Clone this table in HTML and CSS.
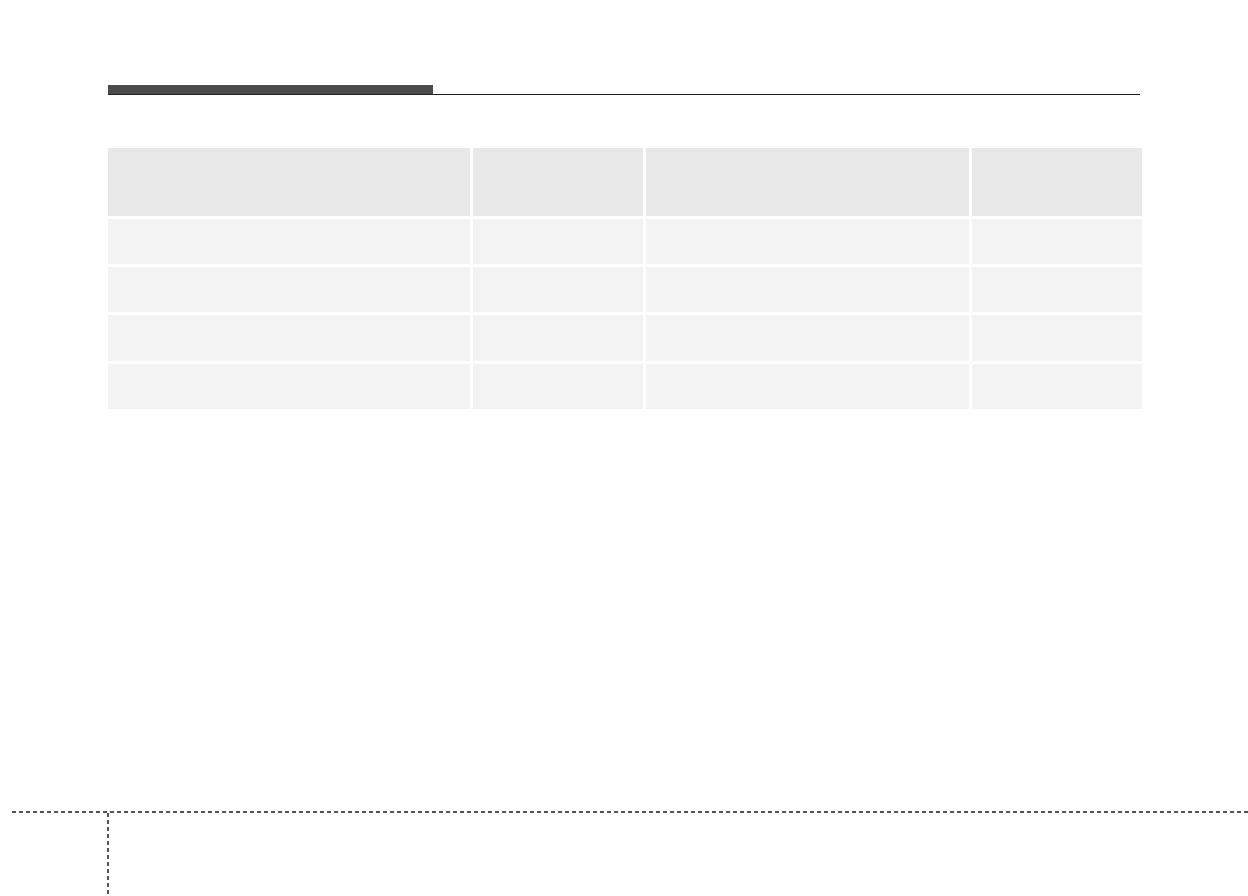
FILE: index.html
```html
<!DOCTYPE html>
<html lang="en">
<head>
    <meta charset="UTF-8">
    <meta name="viewport" content="width=device-width, initial-scale=1.0">
    <title>Manual page</title>
    <link rel="stylesheet" href="styles.css">
</head>
<body>

    <div class="page">
        <header class="page-head">
            <div class="head-tab"></div>
        </header>

        <div class="spec-table">
            <div class="cell head"></div>
            <div class="cell head"></div>
            <div class="cell head"></div>
            <div class="cell head"></div>

            <div class="cell"></div>
            <div class="cell"></div>
            <div class="cell"></div>
            <div class="cell"></div>

            <div class="cell"></div>
            <div class="cell"></div>
            <div class="cell"></div>
            <div class="cell"></div>

            <div class="cell"></div>
            <div class="cell"></div>
            <div class="cell"></div>
            <div class="cell"></div>

            <div class="cell"></div>
            <div class="cell"></div>
            <div class="cell"></div>
            <div class="cell"></div>
        </div>

        <footer class="page-foot">
            <div class="foot-rule"></div>
            <div class="foot-stem"></div>
        </footer>
    </div>

</body>
</html>
```

FILE: styles.css
```css
body {
    font-family: "Liberation Sans", Arial, sans-serif;
    background-color: #fff;
    color: #231f20;
    margin: 0;
    padding: 0;
}

.page {
    min-height: 896px;
    display: flex;
    flex-direction: column;
}

.page-head {
    margin: 85px 108px 0 108px;
    border-bottom: 1px solid #231f20;
}

.head-tab {
    width: 325px;
    height: 9px;
    background-color: #4b4b4b;
}

.spec-table {
    margin: 53px 106px 0 108px;
    display: grid;
    grid-template-columns: 362px 170px 323px 170px;
    grid-template-rows: 68px 45px 45px 46px 45px;
    gap: 3px;
}

.cell {
    background-color: #f3f3f3;
}

.cell.head {
    background-color: #e8e8e8;
}

.page-foot {
    margin-top: auto;
    height: 85px;
    padding-left: 12px;
    display: flex;
    flex-direction: column;
}

.foot-rule {
    height: 2px;
    background: repeating-linear-gradient(to right, #555 0, #555 4px, transparent 4px, transparent 7px);
}

.foot-stem {
    flex: 1;
    width: 2px;
    margin-left: 95px;
    background: repeating-linear-gradient(to bottom, #555 0, #555 4px, transparent 4px, transparent 7px);
}
```
